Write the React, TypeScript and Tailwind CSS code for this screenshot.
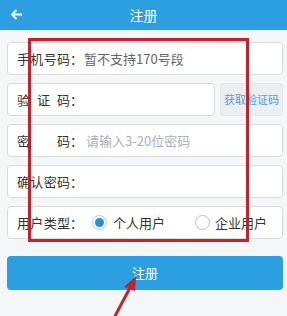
import React from 'react'

function Label({ chars }: { chars: string[] }) {
  return (
    <div className="flex items-center shrink-0">
      <div className="flex w-[53px] justify-between">
        {chars.map((c, i) => (
          <span key={i}>{c}</span>
        ))}
      </div>
      <span className="w-[14px]">：</span>
    </div>
  )
}

function Row({ children, className = '' }: { children: React.ReactNode; className?: string }) {
  return (
    <div className={`flex h-[33px] items-center rounded-[4px] border border-[#d9dcdf] bg-white pl-[9px] ${className}`}>
      {children}
    </div>
  )
}

function Radio({ checked }: { checked?: boolean }) {
  return (
    <span
      className={`flex h-[15px] w-[15px] items-center justify-center rounded-full border bg-white ${
        checked ? 'border-[#9fcdee]' : 'border-[#b9bec4]'
      }`}
    >
      {checked && <span className="h-[9px] w-[9px] rounded-full bg-[#2a8fd4]" />}
    </span>
  )
}

export default function App() {
  return (
    <div
      className="relative h-[316px] w-[287px] overflow-hidden bg-[#f4f6f8] text-[13px] text-[#333]"
      style={{ fontFamily: '"Noto Sans CJK SC", "Noto Sans", sans-serif' }}
    >
      <div className="relative flex h-[30px] items-center justify-center bg-[#2b9fe0] text-[14px] text-white">
        <svg className="absolute left-[10px] top-[8px]" width="13" height="13" viewBox="0 0 13 13" fill="none" stroke="white" strokeWidth="1.8">
          <path d="M12 6.5H2M6.5 2L2 6.5L6.5 11" />
        </svg>
        注册
      </div>

      <div className="flex flex-col gap-[8px] pl-[7px] pr-[4px] pt-[12px]">
        <Row>
          <Label chars={['手', '机', '号', '码']} />
          <span className="text-[#666]">暂不支持170号段</span>
        </Row>
        <div className="flex gap-[5px]">
          <Row className="flex-1">
            <Label chars={['验', '证', '码']} />
          </Row>
          <button className="h-[33px] w-[63px] rounded-[3px] border border-[#e3e5e8] bg-[#eceef0] text-[11px] text-[#4a9fe0]">
            获取验证码
          </button>
        </div>
        <Row>
          <Label chars={['密', '码']} />
          <span className="pl-[2px] text-[#a9b0b8]">请输入3-20位密码</span>
        </Row>
        <Row>
          <Label chars={['确', '认', '密', '码']} />
        </Row>
        <Row>
          <Label chars={['用', '户', '类', '型']} />
          <div className="ml-[8px] flex items-center gap-[6px]">
            <Radio checked />
            <span>个人用户</span>
          </div>
          <div className="ml-[30px] flex items-center gap-[5px]">
            <Radio />
            <span>企业用户</span>
          </div>
        </Row>
        <button className="mt-[9px] h-[34px] rounded-[4px] bg-[#2b9fe0] text-[13px] text-white">注册</button>
      </div>

      <div className="pointer-events-none absolute left-[28px] top-[38px] h-[204px] w-[221px] border-[3px] border-[#c2222b]" />
      <svg className="pointer-events-none absolute left-0 top-0" width="287" height="316" viewBox="0 0 287 316">
        <line x1="114" y1="318" x2="132" y2="284" stroke="#c2222b" strokeWidth="3" />
        <polygon points="136,276 124,287 135,291" fill="#c2222b" />
      </svg>
    </div>
  )
}
